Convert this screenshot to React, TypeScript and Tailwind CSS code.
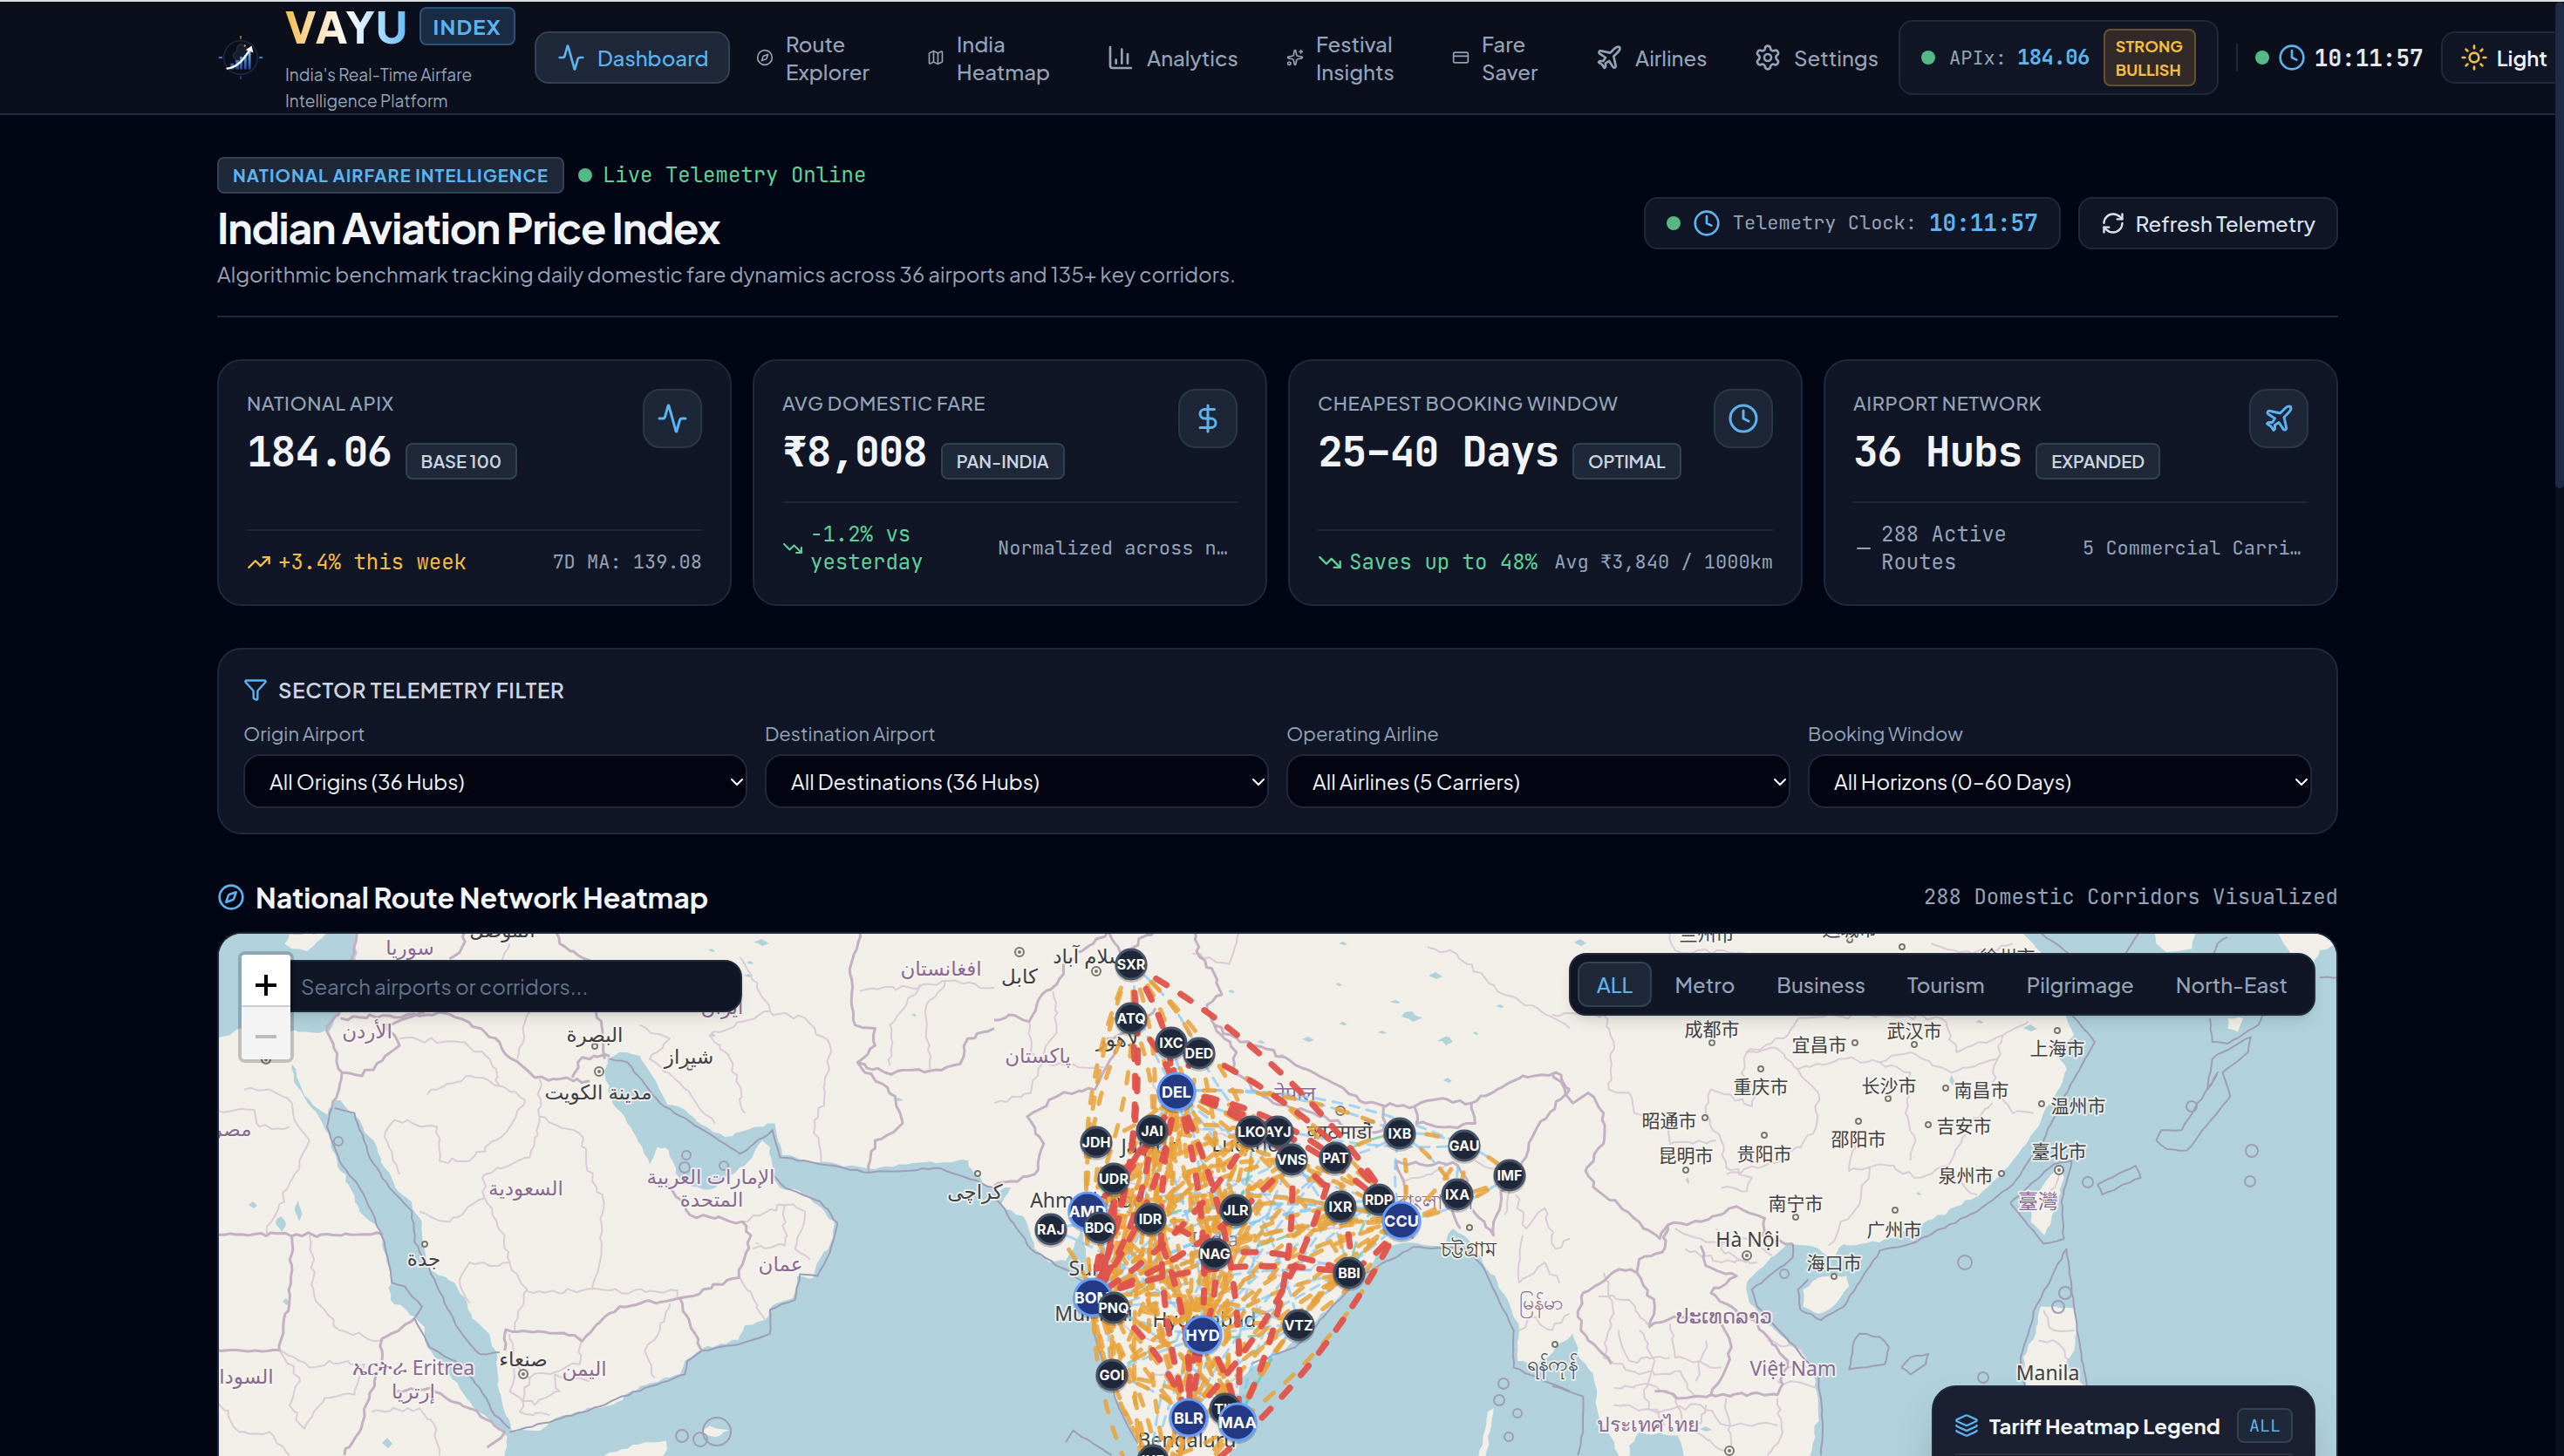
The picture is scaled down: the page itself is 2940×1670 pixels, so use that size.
import React, { useState } from "react";
import {
  Activity, Compass, Map as MapIcon, BarChart3, Sparkles, CreditCard, Plane, Settings, Clock, Sun,
  RefreshCw, DollarSign, TrendingUp, TrendingDown, Minus, Filter, Layers, ChevronDown, type LucideIcon,
} from "lucide-react";

const MONO = "font-['JetBrains_Mono','DejaVu_Sans_Mono',monospace]";

/* ---------- Map geometry ---------- */

type Pt = [number, number];
type Sheet = { ox: number; oy: number; sx: number; sy: number };

const WEST: Sheet = { ox: 240, oy: 1060, sx: 0.574, sy: 0.389 };
const CENTRAL: Sheet = { ox: 1140, oy: 1060, sx: 0.4209, sy: 0.389 };
const EAST: Sheet = { ox: 1780, oy: 1060, sx: 0.5867, sy: 0.389 };
const PLAIN: Sheet = { ox: 0, oy: 0, sx: 1, sy: 1 };

function parse(sheet: Sheet, text: string): Pt[] {
  return text.trim().split(/\s+/).map((p) => {
    const [x, y] = p.split(",").map(Number);
    return [sheet.ox + x * sheet.sx, sheet.oy + y * sheet.sy] as Pt;
  });
}

/* Subdivides a line with small offsets so that borders look surveyed, not ruled. */
function rough(pts: Pt[], amp: number, closed: boolean): string {
  let seed = Math.round(pts[0][0] * 7 + pts[0][1] * 13 + pts.length * 31);
  const rnd = () => {
    seed = (seed * 1103515245 + 12345) % 2147483648;
    return seed / 2147483648 - 0.5;
  };
  const src = closed ? [...pts, pts[0]] : pts;
  const out: Pt[] = [src[0]];
  for (let i = 1; i < src.length; i++) {
    const [ax, ay] = src[i - 1];
    const [bx, by] = src[i];
    const len = Math.hypot(bx - ax, by - ay);
    const n = Math.max(1, Math.min(60, Math.round(len / 7)));
    for (let k = 1; k < n; k++) {
      const t = k / n;
      out.push([ax + (bx - ax) * t + rnd() * amp, ay + (by - ay) * t + rnd() * amp]);
    }
    out.push([bx, by]);
  }
  return "M" + out.map(([x, y]) => `${x.toFixed(1)} ${y.toFixed(1)}`).join("L") + (closed ? "Z" : "");
}

const WATER: [Sheet, string][] = [
  [WEST, "0,0 298,0 292,100 275,180 262,250 240,318 205,322 170,315 150,330 60,310 40,330 0,340"],
  [WEST, "165,415 180,470 200,520 236,565 248,522 262,522 300,580 335,660 350,720 372,780 395,810 425,880 430,960 440,1020 490,1060 515,1120 525,1165 552,1200 572,1260 576,1360 590,1440 605,1500 600,1520 585,1500 520,1410 480,1330 435,1250 430,1190 410,1160 362,1110 358,1010 345,950 340,900 300,850 285,790 255,700 238,620 205,545 175,480"],
  [WEST, "820,380 860,390 885,450 915,535 950,550 985,595 1030,630 1090,600 1130,590 1140,700 1180,790 1140,780 1125,740 1120,660 1105,640 1085,690 1060,720 1000,785 940,770 925,700 910,660 890,680 880,710 865,660 835,590 805,530 790,450 795,400"],
  [PLAIN, "891,1309 897,1326 937,1334 1003,1342 1060,1334 1110,1332 1118,1348 1140,1366 1159,1363 1148,1383 1176,1400 1186,1433 1203,1449 1222,1447 1231,1433 1239,1410 1245,1433 1249,1468 1245,1496 1258,1535 1270,1574 1285,1612 1304,1655 1312,1700 579,1700 579,1667 584,1643 619,1642 636,1628 682,1616 708,1609 734,1591 780,1577 785,1562 805,1548 846,1538 854,1521 877,1515 886,1498 909,1490 914,1465 932,1467 940,1445 955,1420 957,1402 937,1383 917,1367 894,1360 886,1328"],
  [PLAIN, "1409,1700 1409,1670 1422,1620 1420,1585 1435,1570 1460,1558 1489,1535 1510,1515 1536,1488 1565,1461 1578,1441 1595,1430 1616,1426 1654,1430 1666,1410 1683,1422 1700,1449 1717,1472 1733,1503 1742,1527 1740,1562 1763,1566 1784,1546 1803,1531 1812,1560 1827,1577 1833,1624 1856,1670 1860,1700"],
  [EAST, "150,1540 170,1500 245,1510 265,1600 150,1600"],
  [PLAIN, "2311,1060 2331,1083 2343,1099 2337,1138 2367,1161 2378,1188 2358,1212 2370,1227 2358,1254 2343,1278 2326,1309 2302,1340 2279,1363 2249,1383 2202,1406 2155,1426 2114,1428 2103,1445 2085,1433 2050,1428 2026,1449 2003,1472 2006,1496 2032,1523 2067,1554 2082,1585 2085,1624 2076,1670 2076,1700 2700,1700 2700,1060"],
];

const ISLANDS: [Sheet, string][] = [
  [WEST, "160,32 235,28 215,55 195,82 165,75 150,60"],
  [WEST, "760,1600 800,1560 870,1530 912,1525 915,1550 890,1600"],
  [WEST, "980,1502 1000,1482 1040,1495 1010,1515"],
  [WEST, "895,660 915,670 918,700 905,730 890,690"],
  [EAST, "490,1080 520,1045 575,1040 580,1070 555,1120 520,1152 490,1130"],
  [EAST, "995,725 1000,750 985,830 962,920 935,880 945,800 975,740"],
  [EAST, "1175,20 1260,20 1250,75 1200,85 1180,60"],
  [EAST, "1410,20 1560,20 1560,50 1500,80 1480,140 1450,120 1440,80"],
  [EAST, "955,1130 1020,1135 1025,1200 1020,1260 1000,1310 1045,1370 925,1370 920,1280 945,1210"],
  [EAST, "1320,280 1350,280 1340,320 1320,310"],
  [CENTRAL, "1345,1440 1360,1430 1350,1500 1335,1600 1320,1590"],
];

const COUNTRY: [Sheet, string][] = [
  [WEST, "298,20 285,100 262,250 235,305 265,440 245,545"],
  [WEST, "262,280 470,265 550,320 650,455 760,465"],
  [WEST, "265,440 305,450 380,360 350,300 430,262"],
  [WEST, "512,20 505,70 480,105"],
  [WEST, "690,20 700,60 760,110 790,400"],
  [WEST, "725,455 745,395 800,392"],
  [WEST, "15,918 348,918"],
  [WEST, "590,1260 592,1198 730,1215 745,1232 790,1160 820,1130 940,1105 1058,1045 1082,920 1065,880 960,860 915,770"],
  [WEST, "940,1105 983,1258"],
  [WEST, "1300,20 1280,150 1290,300 1330,310 1330,360 1295,410 1350,440 1440,435 1500,415 1515,340 1568,310"],
  [WEST, "1295,410 1370,510 1385,590 1330,640 1318,735"],
  [WEST, "410,1165 345,1225 345,1290 320,1400 300,1500 270,1568"],
  [WEST, "375,1380 440,1370 520,1430 590,1500 555,1545"],
  [WEST, "15,1258 140,1258 160,1120 165,920"],
  [CENTRAL, "0,285 40,270 95,290 130,210 170,180 200,110 270,60 310,20"],
  [CENTRAL, "310,20 345,90 440,20"],
  [CENTRAL, "545,20 560,100 600,150 620,210 580,240 600,300 670,350 740,370 850,430 940,480 1010,530 1145,540 1200,520 1300,530 1440,450 1530,440 1568,490"],
  [CENTRAL, "600,300 660,380 650,440 760,530 870,560 1010,620 1060,610 1060,535"],
  [CENTRAL, "1145,540 1150,590 1240,600 1310,590 1300,530"],
  [CENTRAL, "305,425 275,490 180,505 90,570 135,650 110,740 0,775"],
  [CENTRAL, "305,425 330,380 310,340 400,310 440,250"],
  [CENTRAL, "1095,700 1160,710 1250,705 1290,760 1240,830 1270,900"],
  [CENTRAL, "1095,700 1120,790 1150,830 1140,930"],
  [CENTRAL, "1430,740 1380,790 1360,920 1335,880 1300,840"],
  [CENTRAL, "1568,490 1480,600 1430,740"],
  [EAST, "0,440 40,530 70,500 100,560 100,650 65,730 90,790 130,830 160,870 210,930 225,890 290,880 360,835 415,870 410,920 470,945"],
  [EAST, "225,890 215,970 170,990 165,1030 130,1020 60,1090 50,1160 70,1230 115,1300"],
  [EAST, "165,1030 200,1130 190,1190 250,1160 330,1180 350,1250 340,1310 310,1390 260,1400 200,1380"],
  [EAST, "290,950 300,1010 360,1040 310,1090 400,1180 460,1290 440,1390 310,1390"],
];

const PROVINCE: [Sheet, string][] = [
  [WEST, "70,490 120,490 165,530 170,580 200,640 180,700 115,915"],
  [WEST, "15,550 90,550 100,600 160,600"],
  [WEST, "200,920 210,1100 260,1200 345,1230"],
  [WEST, "435,505 520,450 580,480 630,520 600,600 520,700 460,700 455,600 370,580 350,630 380,740"],
  [WEST, "380,340 500,350 560,400 580,480"],
  [WEST, "660,460 660,570 740,620 765,760 785,800 780,1000 765,1080"],
  [WEST, "660,570 640,690 550,740 550,810 480,880 420,850"],
  [WEST, "550,810 590,920 600,1000 635,1080 610,1200"],
  [WEST, "635,1085 935,1083 935,1105"],
  [WEST, "600,1000 560,1010 520,1000 500,1050 520,1120"],
  [WEST, "920,1120 900,1200 870,1260 890,1340"],
  [WEST, "600,1210 610,1300 640,1340 740,1300 740,1220"],
  [WEST, "610,1300 600,1380 650,1420 700,1380 690,1330 760,1350"],
  [WEST, "640,1340 620,1440 680,1450"],
  [WEST, "15,1400 60,1500 120,1500 160,1568"],
  [WEST, "140,1258 180,1340 160,1420 190,1490 230,1400 290,1390 310,1300 240,1290 200,1310 140,1258"],
  [WEST, "325,1440 420,1430 450,1480 460,1568"],
  [WEST, "860,300 920,340 880,400 940,470 1010,590"],
  [WEST, "1060,100 1120,260 1000,330 1040,400 1070,560"],
  [WEST, "1120,260 1190,280 1240,360 1230,500 1210,600 1222,710"],
  [WEST, "1420,180 1360,300 1360,420"],
  [WEST, "1470,170 1430,260 1440,430"],
  [WEST, "1300,200 1400,190 1480,170 1568,190"],
  [WEST, "1065,880 1150,830 1190,850 1170,960 1200,990"],
  [WEST, "1060,1045 1110,1170"],
  [WEST, "1085,960 1150,950 1150,830"],
  [WEST, "600,60 560,180 640,260 615,400"],
  [CENTRAL, "0,530 100,500 170,300 160,200"],
  [CENTRAL, "95,290 100,380 160,420 300,425"],
  [CENTRAL, "1180,70 1260,90 1370,200 1480,250 1568,310"],
  [CENTRAL, "540,90 640,120 670,20"],
  [CENTRAL, "1090,720 1120,760 1180,740 1250,705"],
  [CENTRAL, "1310,700 1400,740 1390,860"],
  [CENTRAL, "1420,800 1450,900 1500,840 1530,960 1568,930"],
  [CENTRAL, "1440,920 1430,1060 1500,1000 1540,1060"],
  [CENTRAL, "1430,1200 1460,1160 1520,1200 1568,1150"],
  [CENTRAL, "420,440 470,560 600,620 740,640 860,760 1000,770 1040,800"],
  [CENTRAL, "300,720 400,780 560,740 700,760 840,900 940,900"],
  [CENTRAL, "290,1000 400,960 540,1000 640,950 780,1040 920,1000"],
  [CENTRAL, "340,1180 460,1240 540,1100 700,1080 740,1200"],
  [CENTRAL, "350,1350 480,1330 600,1400 660,1340"],
  [EAST, "0,270 100,270 120,350 110,490 150,500 160,560 220,580 230,650 320,640"],
  [EAST, "230,20 240,80 380,90"],
  [EAST, "740,60 820,90 900,60"],
  [EAST, "480,280 460,330 380,380 370,440 400,500 390,540 310,490 300,560 330,640 340,720 390,750 380,790 330,780"],
  [EAST, "380,380 440,370 480,430 520,500 510,620 450,700 340,740"],
  [EAST, "480,430 560,400 640,410 700,440 690,560 710,640 700,700"],
  [EAST, "640,410 700,380 780,440 870,400 880,330 930,290"],
  [EAST, "870,400 860,470 900,560 940,560"],
  [EAST, "860,530 810,600 780,700 720,750 640,710 580,730 590,650"],
  [EAST, "620,720 600,830 560,900 540,950"],
  [EAST, "770,740 830,800"],
  [EAST, "760,280 790,380 880,330"],
  [EAST, "480,280 620,270 760,280"],
  [EAST, "100,1030 120,1150 100,1280 170,1330 250,1320 280,1400"],
  [EAST, "170,1200 200,1290 180,1400 220,1480"],
  [EAST, "230,1180 240,1280 330,1310"],
  [EAST, "120,1420 200,1440 290,1420 340,1480 440,1480"],
  [EAST, "300,1230 280,1350"],
  [EAST, "130,1200 150,1290 230,1280"],
  [EAST, "90,1100 150,1110 190,1190"],
  [EAST, "120,1370 190,1360 240,1400 260,1500"],
  [EAST, "300,1420 280,1500 350,1568"],
  [EAST, "240,900 300,940 380,930 430,980"],
  [EAST, "260,960 330,1000 400,1000"],
  [EAST, "320,900 330,960 380,1000"],
  [EAST, "400,1180 440,1150"],
  [EAST, "420,1230 490,1260"],
  [EAST, "430,1300 500,1310"],
  [EAST, "440,1350 515,1370"],
  [EAST, "340,1400 350,1568"],
  [EAST, "440,1400 450,1500 420,1568"],
  [EAST, "960,1140 980,1200 1020,1200"],
  [EAST, "950,1230 990,1240 1010,1290"],
  [EAST, "990,740 975,800 990,830"],
];

const MARITIME: [Sheet, string][] = [
  [WEST, "245,545 235,600 260,700 300,780 325,850 350,940 365,1060 390,1070 425,1130 410,1165 440,1250 500,1300 540,1370 570,1450 600,1490"],
  [WEST, "250,545 290,560 320,690 360,780 405,850 410,940 450,1050 470,1120 500,1200 540,1270 580,1265"],
  [WEST, "800,400 835,410 900,530 1030,650 1060,680 1125,610 1140,690 1220,710 1318,735 1460,722 1568,780"],
  [WEST, "1125,740 1150,780 1220,820 1255,885 1240,970 1215,1040 1180,1035 1170,1110 1120,1140 1120,1210 1060,1240 985,1260 955,1290 950,1330 870,1370 780,1425 690,1465 600,1500"],
  [CENTRAL, "0,800 100,960 250,1060 280,1240 340,1430 390,1530 430,1600"],
  [CENTRAL, "195,1530 215,1495 320,1568"],
  [CENTRAL, "700,1300 820,1250 1000,1040 1140,955 1290,960 1330,1010 1415,1200 1415,1310 1568,1380"],
  [EAST, "0,1365 60,1395 60,1500 50,1568"],
  [EAST, "470,945 470,985 390,1080 400,1130 480,1260 520,1330 528,1470 525,1568"],
  [EAST, "500,1050 480,1080 485,1140 525,1170 570,1130 640,965 700,945 830,850 900,770 960,640 1000,510 1060,350 1010,260"],
  [EAST, "895,825 980,710 1015,700 995,820 1000,930 960,945 895,825"],
  [EAST, "1005,960 1025,1200 1045,1370"],
  [EAST, "1005,960 945,1130 915,1280 925,1370"],
  [EAST, "600,1210 640,1220 658,1250 650,1300 580,1315 590,1230 600,1210"],
  [EAST, "682,1310 700,1280 735,1270 730,1300 700,1330 682,1310"],
  [EAST, "1180,640 1190,610 1230,610 1300,440 1280,490 1290,400 1310,380 1365,335 1360,380 1310,440 1325,510 1240,670 1200,665 1180,640"],
  [EAST, "1065,770 1140,715 1150,750 1075,800 1065,770"],
  [EAST, "1285,280 1290,350 1320,355 1380,300 1390,260"],
  [EAST, "945,20 1010,90 940,160"],
  [EAST, "1120,90 1150,20"],
  [EAST, "1240,270 1300,60 1320,40"],
  [EAST, "1500,160 1540,160"],
];

const RINGS: [number, number, number][] = [
  [2253, 1449, 8], [2582, 1321, 7], [2580, 1356, 6], [2394, 1357, 6], [2046, 1462, 5], [2274, 1581, 6], [2513, 1270, 6],
  [1724, 1588, 6], [1719, 1607, 6], [1740, 1622, 5], [1730, 1649, 5], [388, 1310, 5], [787, 1326, 5], [785, 1340, 6],
  [830, 1338, 5], [782, 1648, 7], [822, 1643, 16], [803, 1652, 8], [2368, 1484, 7], [2360, 1500, 7],
];

const LAKES: [number, number, number, number][] = [
  [1619, 1167, 12, 6], [1657, 1195, 9, 5], [1646, 1120, 8, 4], [1500, 1193, 7, 3], [1540, 1175, 5, 2], [1585, 1185, 5, 2],
  [1446, 1196, 5, 2], [1412, 1138, 4, 2], [1600, 1150, 6, 2], [1535, 1130, 4, 2], [1660, 1240, 5, 3], [1720, 1155, 5, 2],
  [1812, 1082, 7, 4], [873, 1082, 9, 4], [816, 1091, 4, 2], [860, 1105, 4, 2], [858, 1120, 5, 2], [1030, 1262, 6, 2],
  [290, 1383, 5, 4], [342, 1390, 4, 12], [322, 1405, 6, 9], [444, 1656, 6, 6], [328, 1494, 4, 4], [1048, 1165, 3, 2],
  [2328, 1180, 8, 4], [2238, 1240, 3, 6], [2200, 1370, 3, 2], [1935, 1355, 2, 4], [2270, 1173, 5, 2], [817, 1188, 4, 2],
  [868, 1427, 3, 1], [1956, 1640, 7, 3], [1540, 1083, 5, 2], [1470, 1212, 4, 2], [1692, 1186, 3, 2],
];

/* Kinds: c = city, p = country or region, h = city in Han script. */
type Label = [number, number, string, "c" | "p" | "h"];
const LABELS: Label[] = [
  [470, 1087, "سوريا", "p"], [1079, 1111, "افغانستان", "p"], [682, 1187, "البصرة", "c"], [421, 1183, "الأردن", "p"],
  [790, 1212, "شیراز", "c"], [686, 1253, "مدينة الكويت", "c"], [266, 1295, "مصر", "p"], [603, 1363, "السعودية", "p"],
  [815, 1350, "الإمارات العربية", "p"], [816, 1376, "المتحدة", "p"], [895, 1450, "عمان", "p"], [486, 1444, "جدة", "c"],
  [600, 1559, "صنعاء", "c"], [670, 1570, "اليمن", "p"], [474, 1569, "ኤርትራ Eritrea", "p"], [474, 1596, "إرتريا", "p"],
  [274, 1579, "السودان", "p"], [828, 1155, "ایران", "p"], [1118, 1367, "کراچی", "c"], [576, 1067, "الموصل", "c"],
  [1169, 1120, "کابل", "c"], [1252, 1097, "اسلام آباد", "c"], [1281, 1192, "لاهور", "c"], [1190, 1211, "پاکستان", "p"],
  [1485, 1254, "नेपाल", "p"], [1536, 1298, "काठमाडौँ", "c"], [1317, 1315, "Jaipur", "c"], [1437, 1313, "Lucknow", "c"],
  [1247, 1377, "Ahmedabad", "c"], [1254, 1455, "Surat", "c"], [1254, 1507, "Mumbai", "c"], [1381, 1514, "Hyderabad", "c"],
  [1361, 1652, "Bengaluru", "c"], [1393, 1422, "India", "p"], [1684, 1433, "চট্টগ্রাম", "c"], [1645, 1379, "বাংলাদেশ", "p"],
  [1767, 1494, "မြန်မာ", "p"], [1780, 1564, "ရန်ကုန်", "c"],
  [1963, 1181, "成都市", "h"], [2086, 1199, "宜昌市", "h"], [2195, 1183, "武汉市", "h"], [2359, 1203, "上海市", "h"],
  [2019, 1247, "重庆市", "h"], [2166, 1246, "长沙市", "h"], [2272, 1251, "南昌市", "h"], [2383, 1269, "温州市", "h"],
  [1914, 1286, "昭通市", "h"], [2252, 1292, "吉安市", "h"], [1933, 1326, "昆明市", "h"], [2023, 1324, "贵阳市", "h"],
  [2131, 1307, "邵阳市", "h"], [2361, 1321, "臺北市", "h"], [2254, 1349, "泉州市", "h"], [2337, 1378, "臺灣", "p"],
  [2059, 1381, "南宁市", "h"], [2172, 1411, "广州市", "h"], [2103, 1449, "海口市", "h"], [2004, 1422, "Hà Nội", "c"],
  [1977, 1510, "ປະເທດລາວ", "p"], [2056, 1570, "Việt Nam", "p"], [1889, 1634, "ประเทศไทย", "p"], [2348, 1575, "Manila", "c"],
  [1957, 1072, "兰州市", "h"], [2121, 1066, "运城市", "h"], [2302, 1098, "徐州市", "h"],
];

const TOWNS: Pt[] = [
  [1963, 1197], [2127, 1197], [2195, 1199], [2359, 1183], [2019, 1227], [2165, 1261], [2231, 1249], [2341, 1267],
  [1955, 1283], [2211, 1291], [1933, 1343], [2023, 1303], [2131, 1287], [2295, 1347], [2059, 1397], [2173, 1389],
  [2103, 1465], [2121, 1079], [2181, 1087], [682, 1201], [791, 1225], [487, 1428], [1121, 1347], [1685, 1409], [1783, 1543],
];
const CAPITALS: Pt[] = [
  [2361, 1343], [2003, 1441], [1983, 1665], [687, 1230], [600, 1577], [1169, 1093], [1257, 1115], [1537, 1275], [305, 1216],
];

/* ---------- Airports and corridors ---------- */

const AIRPORTS: Record<string, { x: number; y: number; hub?: boolean }> = {
  SXR: { x: 1297, y: 1107 }, ATQ: { x: 1297, y: 1169 }, IXC: { x: 1343, y: 1197 }, DED: { x: 1375, y: 1209 },
  JAI: { x: 1321, y: 1298 }, JDH: { x: 1257, y: 1311 }, AYJ: { x: 1465, y: 1299 }, LKO: { x: 1435, y: 1299 },
  VNS: { x: 1481, y: 1331 }, PAT: { x: 1531, y: 1329 }, IXB: { x: 1605, y: 1301 }, GAU: { x: 1679, y: 1315 },
  IMF: { x: 1731, y: 1349 }, IXA: { x: 1671, y: 1371 }, UDR: { x: 1277, y: 1353 }, AMD: { x: 1247, y: 1390, hub: true },
  RAJ: { x: 1205, y: 1411 }, BDQ: { x: 1261, y: 1409 }, IDR: { x: 1319, y: 1399 }, JLR: { x: 1417, y: 1389 },
  NAG: { x: 1393, y: 1439 }, IXR: { x: 1537, y: 1385 }, RDP: { x: 1581, y: 1377 }, CCU: { x: 1607, y: 1401, hub: true },
  BBI: { x: 1547, y: 1461 }, DEL: { x: 1349, y: 1253, hub: true }, BOM: { x: 1253, y: 1489, hub: true },
  PNQ: { x: 1277, y: 1501 }, HYD: { x: 1379, y: 1532, hub: true }, VTZ: { x: 1489, y: 1521 }, GOI: { x: 1275, y: 1578 },
  BLR: { x: 1363, y: 1627, hub: true }, TIR: { x: 1405, y: 1617 }, MAA: { x: 1419, y: 1632, hub: true },
  IXE: { x: 1322, y: 1676 }, CJB: { x: 1345, y: 1712 }, COK: { x: 1318, y: 1735 }, TRV: { x: 1340, y: 1775 },
};

const RED = "SXR-CCU SXR-BOM ATQ-BOM SXR-DEL DEL-IXC DEL-DED DEL-BOM JAI-BOM BOM-JAI DEL-UDR DEL-CCU DEL-PAT DEL-VNS DED-CCU DEL-BLR BLR-DEL DEL-MAA CCU-COK BOM-BBI NAG-BBI IDR-NAG PAT-BLR VNS-MAA LKO-BOM VNS-BOM PNQ-BLR BLR-HYD HYD-MAA NAG-HYD CCU-BBI IXR-BBI BDQ-BOM IDR-BLR UDR-BOM VNS-IXR DEL-AMD ATQ-DEL".split(" ");

const AMBER = "SXR-AMD AMD-SXR BOM-SXR SXR-JAI SXR-IXC SXR-DED ATQ-DEL ATQ-JAI AMD-ATQ IXC-BOM IXC-HYD DED-BOM DED-HYD DED-PAT DED-CCU SXR-LKO DEL-IXB IXB-GAU GAU-IMF IMF-IXA GAU-IXA IXA-CCU IMF-CCU GAU-CCU IXB-CCU IXB-IXA PAT-IXB PAT-CCU PAT-IXR IXR-CCU RDP-IXR RDP-PAT DEL-HYD HYD-DEL DEL-GOI DEL-NAG NAG-DEL DEL-IDR DEL-JLR DEL-PNQ PNQ-DEL DEL-COK COK-DEL DEL-TIR DEL-BBI DEL-IXR DEL-LKO DEL-AYJ DEL-JDH JDH-BOM JDH-AMD RAJ-BOM UDR-IDR UDR-HYD AMD-GOI AMD-BLR AMD-MAA AMD-HYD AMD-NAG AMD-VNS AMD-LKO AMD-CCU BOM-GOI GOI-BOM BOM-COK BOM-TRV BOM-HYD BOM-NAG BOM-JLR BOM-LKO BOM-AYJ BOM-PAT BOM-CCU BOM-VTZ BOM-BLR BOM-MAA PNQ-HYD PNQ-NAG PNQ-CCU PNQ-MAA PNQ-JAI PNQ-LKO GOI-HYD GOI-BLR GOI-MAA GOI-CCU HYD-CCU HYD-BBI HYD-VTZ HYD-VNS HYD-LKO HYD-PAT HYD-IXR HYD-JAI HYD-IDR HYD-COK HYD-TIR BLR-CCU BLR-BBI BLR-VTZ BLR-LKO BLR-VNS BLR-JAI BLR-IDR BLR-NAG BLR-JLR BLR-IXE BLR-COK BLR-PNQ MAA-CCU MAA-BBI MAA-VTZ MAA-JAI MAA-LKO MAA-NAG MAA-COK MAA-IXE VTZ-CCU CCU-VTZ VTZ-BBI BBI-CCU BBI-IXR NAG-CCU NAG-VNS NAG-IXR JLR-IXR JLR-VNS JLR-IDR IDR-LKO IDR-VNS IDR-BDQ BDQ-DEL BDQ-HYD JAI-LKO JAI-NAG JAI-CCU LKO-VNS LKO-HYD AYJ-VNS VNS-CCU CCU-MAA COK-BBI COK-BOM GOI-DEL IXE-BOM TRV-BLR TRV-MAA BLR-IXR CJB-HYD CJB-DEL CJB-BOM".split(" ");

const SKY = "SXR-DED DEL-SXR DEL-GAU DEL-IXB GAU-DEL IXB-GAU GAU-IMF IMF-CCU IXA-GAU IXB-IXA CCU-IXB IXB-PAT IXR-CCU RDP-DEL BOM-DEL BOM-VNS BOM-JLR BOM-IXR BOM-RDP BOM-CCU BOM-MAA RAJ-HYD RAJ-BDQ AMD-PNQ AMD-JLR AMD-IXR GOI-PNQ GOI-BLR GOI-VTZ HYD-BOM HYD-NAG HYD-RDP HYD-AYJ HYD-BBI BLR-HYD BLR-MAA BLR-VTZ BLR-PAT BLR-RDP MAA-HYD MAA-VTZ MAA-BBI MAA-IXR MAA-VNS PNQ-IDR PNQ-BBI PNQ-VTZ NAG-BOM NAG-BBI NAG-LKO JLR-DEL JLR-CCU IDR-JAI IDR-CCU JAI-HYD JAI-PAT VNS-BBI VNS-DED PAT-BOM LKO-IXR COK-HYD COK-NAG CCU-HYD DEL-VTZ IXC-BLR".split(" ");

const GREEN = "JAI-UDR DEL-JAI AMD-IDR IDR-JLR NAG-JLR BOM-PNQ PNQ-NAG BLR-TIR HYD-IDR MAA-CCU BBI-RDP VTZ-HYD BOM-IDR PAT-IXB JAI-IDR GOI-HYD LKO-JLR IXR-NAG".split(" ");

function routePath(pair: string): string {
  const [a, b] = pair.split("-").map((k) => AIRPORTS[k]);
  const dx = b.x - a.x;
  const dy = b.y - a.y;
  const cx = (a.x + b.x) / 2 + dy * 0.13;
  const cy = (a.y + b.y) / 2 - dx * 0.13;
  return `M${a.x} ${a.y}Q${cx.toFixed(1)} ${cy.toFixed(1)} ${b.x} ${b.y}`;
}

function Routes({ pairs, color, width, dash, opacity }: { pairs: string[]; color: string; width: number; dash: string; opacity: number }) {
  return (
    <g fill="none" stroke={color} strokeWidth={width} strokeDasharray={dash} strokeOpacity={opacity} strokeLinecap="round">
      {pairs.map((p, i) => <path key={p + i} d={routePath(p)} />)}
    </g>
  );
}

function GeoMap() {
  const line = (list: [Sheet, string][], amp: number) =>
    list.map(([s, t], i) => <path key={i} d={rough(parse(s, t), amp, false)} />);
  return (
    <svg viewBox="251 1072 2428 1100" preserveAspectRatio="xMidYMin slice" className="block h-full w-full bg-[#f2efe9]" aria-label="Route network map">
      <g fill="#b1d2dd">
        {WATER.map(([s, t], i) => <path key={i} d={rough(parse(s, t), 4, true)} />)}
        {LAKES.map(([x, y, w, h], i) => <path key={i} d={rough([[x - w, y], [x, y - h], [x + w, y + 1], [x + 1, y + h]], 5, true)} />)}
      </g>
      <g fill="#f2efe9">
        {ISLANDS.map(([s, t], i) => <path key={i} d={rough(parse(s, t), 3, true)} />)}
      </g>
      <g fill="none" strokeLinejoin="round">
        <g stroke="#dacbd6" strokeWidth="2">{line(PROVINCE, 6)}</g>
        <g stroke="#c3b0c2" strokeWidth="3">{line(COUNTRY, 5)}</g>
        <g stroke="#9f9cb8" strokeWidth="2">
          {line(MARITIME, 2)}
          {RINGS.map(([x, y, r], i) => <circle key={i} cx={x} cy={y} r={r} />)}
        </g>
      </g>
      <g fill="#f5f3ee" stroke="#77776f" strokeWidth="2">
        {TOWNS.map(([x, y], i) => <circle key={i} cx={x} cy={y} r="3" />)}
        {CAPITALS.map(([x, y], i) => (
          <g key={i}><circle cx={x} cy={y} r="5" /><circle cx={x} cy={y} r="1" /></g>
        ))}
      </g>
      <g className="font-['Noto_Sans','Noto_Sans_CJK_SC','DejaVu_Sans',sans-serif]" textAnchor="middle" dominantBaseline="central" stroke="#f7f5f1" strokeWidth="4" strokeOpacity="0.8" strokeLinejoin="round" style={{ paintOrder: "stroke" }}>
        {LABELS.map(([x, y, t, kind], i) => (
          <text key={i} x={x} y={y} fontSize={kind === "h" ? 21 : 23} fill={kind === "p" ? "#8a6a90" : "#404040"}>{t}</text>
        ))}
      </g>
      <Routes pairs={SKY} color="#7cc4f5" width={3} dash="11 9" opacity={0.65} />
      <Routes pairs={GREEN} color="#6cc49a" width={3} dash="13 10" opacity={0.7} />
      <Routes pairs={AMBER} color="#e9a23b" width={5} dash="13 18" opacity={0.85} />
      <Routes pairs={RED} color="#df524c" width={7} dash="14 19" opacity={0.95} />
      <g className="font-['Inter',sans-serif]" fontWeight="700" textAnchor="middle" dominantBaseline="central" fill="#fff">
        {Object.entries(AIRPORTS).map(([code, a]) => (
          <g key={code}>
            <circle cx={a.x} cy={a.y + 2} r={a.hub ? 23 : 19} fill="#000" fillOpacity="0.2" />
            <circle cx={a.x} cy={a.y} r={a.hub ? 21 : 17} fill={a.hub ? "#243a85" : "#1e283a"} stroke={a.hub ? "#6a9df6" : "#475366"} strokeWidth="3" />
            <text x={a.x} y={a.y} fontSize={a.hub ? 18 : 16}>{code}</text>
          </g>
        ))}
      </g>
    </svg>
  );
}

/* ---------- Header ---------- */

function Dot() {
  return <span className="size-4 shrink-0 rounded-full bg-[#54b985]" />;
}

function Logo() {
  return (
    <svg viewBox="0 0 56 56" className="h-14 w-[54px] shrink-0" aria-label="Vayu logo">
      <defs>
        <linearGradient id="bars" x1="0" y1="0" x2="0" y2="1">
          <stop offset="0" stopColor="#6cc0f5" />
          <stop offset="1" stopColor="#24459c" />
        </linearGradient>
      </defs>
      <circle cx="28" cy="28" r="20" fill="none" stroke="#1b2a40" strokeWidth="1.5" />
      <path d="M2 28h4M50 28h4" stroke="#3b82b8" strokeWidth="2" />
      <path d="M28 2v4" stroke="#c98a2c" strokeWidth="1.5" />
      <path d="M28 50v4" stroke="#2f4fb0" strokeWidth="1.5" />
      <path d="M24 14l5-3 4 5 5 2-3 8-6 9-7-4-4-6 5-4z" fill="#16202f" stroke="#26364d" strokeWidth="1" />
      <path d="M16 42v-7h4v7zM22 42V31h4v11zM27 42V27h3v15zM32 42V25h3v17zM37 42V21h3v21z" fill="url(#bars)" />
      <path d="M12 41c11-1 18-9 26-21" fill="none" stroke="#fff" strokeWidth="2.4" strokeLinecap="round" />
      <path d="M34 19l7-5 2 8z" fill="#fff" />
      <circle cx="33" cy="14" r="1.2" fill="#e39a35" />
    </svg>
  );
}

const NAV: { label: string; icon: LucideIcon; width: string; small?: boolean; active?: boolean }[] = [
  { label: "Dashboard", icon: Activity, width: "w-56", active: true },
  { label: "Route Explorer", icon: Compass, width: "w-48", small: true },
  { label: "India Heatmap", icon: MapIcon, width: "w-[202px]", small: true },
  { label: "Analytics", icon: BarChart3, width: "w-[202px]" },
  { label: "Festival Insights", icon: Sparkles, width: "w-[186px]", small: true },
  { label: "Fare Saver", icon: CreditCard, width: "w-[160px]", small: true },
  { label: "Airlines", icon: Plane, width: "w-[178px]" },
  { label: "Settings", icon: Settings, width: "w-48" },
];

function Header() {
  return (
    <header className="h-[130px] shrink-0 border-b-2 border-[#1e293b] bg-[#0b0f1c]">
      <div className="mx-auto flex h-full max-w-[2560px] items-center px-16">
        <Logo />
        <div className="ml-6 w-[268px] shrink-0">
          <div className="flex items-center gap-3">
            <span className="bg-linear-to-r from-[#f3bd48] via-white to-[#5db8f5] bg-clip-text text-[50px] leading-[56px] font-extrabold tracking-wide text-transparent">VAYU</span>
            <span className="rounded-lg border-2 border-[#28527a] bg-[#1a2c44] px-3.5 py-1 text-2xl leading-8 font-bold tracking-wider text-[#5cb3f0]">INDEX</span>
          </div>
          <p className="mt-3 text-[19px] leading-[30px] whitespace-nowrap text-[#94a3b8]">India's Real-Time Airfare<br />Intelligence Platform</p>
        </div>
        <nav className="ml-[18px] flex shrink-0 items-center gap-1">
          {NAV.map(({ label, icon: Icon, width, small, active }) => (
            <a key={label} href="#" className={`flex shrink-0 items-center gap-3.5 rounded-2xl border-2 px-6 py-3 text-2xl leading-8 font-medium ${width} ${active ? "border-[#334155] bg-[#1f2838] text-[#5cb3f0]" : "border-transparent text-[#94a3b8]"}`}>
              <Icon className={small ? "size-5 shrink-0" : "size-8 shrink-0"} />
              <span>{label}</span>
            </a>
          ))}
        </nav>
        <div className="flex shrink-0 items-center">
          <div className="flex items-center gap-4 rounded-2xl border-2 border-[#1e293b] bg-[#111627] px-6 py-2">
            <Dot />
            <span className={`flex items-center gap-3 ${MONO}`}>
              <span className="text-[22px] text-[#94a3b8]">APIx:</span>
              <span className="text-2xl font-bold tracking-tight text-[#5cb3f0]">184.06</span>
            </span>
            <span className="w-[106px] rounded-lg border-2 border-[#6b502a] bg-[#322a29] px-3 py-1 text-lg leading-[27px] font-bold text-[#f5bc42]">STRONG BULLISH</span>
          </div>
          <span className="mx-5 h-8 w-0.5 bg-[#1e293b]" />
          <div className="flex items-center gap-2.5">
            <Dot />
            <Clock className="size-8 text-[#5cb3f0]" />
            <time className={`text-[26px] font-bold text-[#e2e8f0] ${MONO}`}>10:11:57</time>
          </div>
          <button className="ml-5 flex items-center gap-2.5 rounded-2xl border-2 border-[#1e293b] bg-[#111627] px-5 py-3 text-2xl leading-8 font-semibold text-[#f1f5f9]">
            <Sun className="size-8 text-[#f5bc42]" />
            Light
          </button>
        </div>
      </div>
    </header>
  );
}

/* ---------- Page sections ---------- */

function PageTitle() {
  return (
    <div className="flex items-center justify-between border-b-2 border-[#1e293b] pb-[30px]">
      <div>
        <div className="flex items-center">
          <span className="rounded-lg border-2 border-[#334155] bg-[#1f2838] px-4 py-1 text-xl leading-[30px] font-bold tracking-wider text-[#5cb3f0]">NATIONAL AIRFARE INTELLIGENCE</span>
          <span className={`ml-4 flex items-center gap-3 text-2xl leading-8 text-[#5fd196] ${MONO}`}><Dot />Live Telemetry Online</span>
        </div>
        <h1 className="mt-3 text-5xl leading-[54px] font-bold tracking-tight text-[#f1f5f9]">Indian Aviation Price Index</h1>
        <p className="mt-2 text-2xl leading-9 text-[#94a3b8]">Algorithmic benchmark tracking daily domestic fare dynamics across 36 airports and 135+ key corridors.</p>
      </div>
      <div className="flex items-center gap-5">
        <div className={`flex items-center gap-3.5 rounded-2xl border-2 border-[#1e293b] bg-[#111627] px-6 py-3 leading-8 ${MONO}`}>
          <Dot />
          <Clock className="size-8 text-[#5cb3f0]" />
          <span className="text-[22px] text-[#94a3b8]">Telemetry Clock:</span>
          <time className="text-[26px] font-bold text-[#5cb3f0]">10:11:57</time>
        </div>
        <button className="flex items-center gap-3 rounded-2xl border-2 border-[#1e293b] bg-[#111627] px-6 py-3 text-2xl leading-8 font-medium text-[#dbe2ec]">
          <RefreshCw className="size-7" />
          Refresh Telemetry
        </button>
      </div>
    </div>
  );
}

type Stat = { label: string; value: string; tag: string; icon: LucideIcon; trendIcon: LucideIcon; trend: React.ReactNode; color: string; note: string; noteWidth: string; small?: boolean };
const STATS: Stat[] = [
  { label: "NATIONAL APIX", value: "184.06", tag: "BASE 100", icon: Activity, trendIcon: TrendingUp, trend: "+3.4% this week", color: "text-[#f5bc42]", note: "7D MA: 139.08", noteWidth: "" },
  { label: "AVG DOMESTIC FARE", value: "₹8,008", tag: "PAN-INDIA", icon: DollarSign, trendIcon: TrendingDown, trend: "-1.2% vs yesterday", color: "text-[#5fd196]", note: "Normalized across network", noteWidth: "w-[275px]", small: true },
  { label: "CHEAPEST BOOKING WINDOW", value: "25–40 Days", tag: "OPTIMAL", icon: Clock, trendIcon: TrendingDown, trend: "Saves up to 48%", color: "text-[#5fd196]", note: "Avg ₹3,840 / 1000km", noteWidth: "" },
  { label: "AIRPORT NETWORK", value: "36 Hubs", tag: "EXPANDED", icon: Plane, trendIcon: Minus, trend: "288 Active Routes", color: "text-[#94a3b8]", note: "5 Commercial Carriers", noteWidth: "w-[259px]", small: true },
];

function StatCard({ s }: { s: Stat }) {
  const Icon = s.icon;
  const Trend = s.trendIcon;
  return (
    <article className="flex min-h-[283px] flex-col justify-between rounded-[28px] border-2 border-[#1e293b] bg-[#111627] p-8">
      <div className="flex items-start justify-between">
        <div>
          <h2 className="text-[22px] leading-8 font-medium tracking-wide text-[#94a3b8]">{s.label}</h2>
          <div className="mt-2 flex items-end gap-4">
            <span className={`text-5xl leading-[64px] font-bold tracking-tight whitespace-nowrap text-[#f1f5f9] ${MONO}`}>{s.value}</span>
            <span className="rounded-lg border-2 border-[#334155] bg-[#1f2838] px-4 py-1 text-xl leading-[30px] font-semibold whitespace-nowrap text-[#cbd5e1]">{s.tag}</span>
          </div>
        </div>
        <span className="flex size-[68px] shrink-0 items-center justify-center rounded-[20px] border-2 border-[#2a3749] bg-[#1c2636]">
          <Icon className="size-9 text-[#5cb3f0]" />
        </span>
      </div>
      <div className={`flex items-center justify-between gap-4 border-t-2 border-[#1c2638] pt-5 ${MONO}`}>
        <span className={`flex items-center gap-2 text-2xl leading-8 ${s.color}`}>
          <Trend className={s.small ? "size-6 shrink-0" : "size-7 shrink-0"} />
          <span className={s.small ? "w-[150px]" : "whitespace-nowrap"}>{s.trend}</span>
        </span>
        <span className={`shrink-0 truncate text-[22px] leading-8 text-[#94a3b8] ${s.noteWidth}`}>{s.note}</span>
      </div>
    </article>
  );
}

const FILTERS = [
  { id: "origin", label: "Origin Airport", value: "All Origins (36 Hubs)" },
  { id: "destination", label: "Destination Airport", value: "All Destinations (36 Hubs)" },
  { id: "airline", label: "Operating Airline", value: "All Airlines (5 Carriers)" },
  { id: "window", label: "Booking Window", value: "All Horizons (0–60 Days)" },
];

function FilterPanel() {
  return (
    <section className="mt-12 rounded-[28px] border-2 border-[#1e293b] bg-[#111627] p-7">
      <h2 className="flex items-center gap-3 text-2xl leading-9 font-semibold tracking-wide text-[#cbd5e1]">
        <Filter className="size-7 text-[#5cb3f0]" />
        SECTOR TELEMETRY FILTER
      </h2>
      <div className="mt-4 grid grid-cols-4 gap-5">
        {FILTERS.map((f) => (
          <div key={f.id}>
            <label htmlFor={f.id} className="block text-[22px] leading-8 text-[#94a3b8]">{f.label}</label>
            <div className="relative mt-2">
              <select id={f.id} className="h-[62px] w-full appearance-none rounded-[20px] border-2 border-[#1e293b] bg-[#020412] px-7 text-2xl text-[#f1f5f9]">
                <option>{f.value}</option>
              </select>
              <ChevronDown className="pointer-events-none absolute top-5 right-0 size-6 text-white" />
            </div>
          </div>
        ))}
      </div>
    </section>
  );
}

const TABS = ["ALL", "Metro", "Business", "Tourism", "Pilgrimage", "North-East"];

function Heatmap() {
  const [tab, setTab] = useState("ALL");
  return (
    <section className="mt-12">
      <div className="flex items-center justify-between">
        <h2 className="flex items-center gap-3 text-[32px] leading-[48px] font-bold text-[#f1f5f9]">
          <Compass className="size-8 text-[#5cb3f0]" />
          National Route Network Heatmap
        </h2>
        <span className={`text-2xl text-[#94a3b8] ${MONO}`}>288 Domestic Corridors Visualized</span>
      </div>
      <div className="relative mt-4 h-[1104px] overflow-hidden rounded-[28px] border-2 border-[#1e293b]">
        <GeoMap />
        <label className="absolute top-[30px] left-8 block">
          <input type="text" aria-label="Search airports or corridors" placeholder="Search airports or corridors..." className="h-[60px] w-[568px] rounded-[20px] border-2 border-[#1e293b] bg-[#111627] pr-6 pl-[60px] text-2xl text-white shadow-lg placeholder:text-[#64748b]" />
        </label>
        <div className="absolute top-5 left-[22px] flex w-16 flex-col overflow-hidden rounded-lg border-4 border-black/20 bg-clip-padding">
          <button aria-label="Zoom in" className="flex h-[60px] items-center justify-center border-b-2 border-[#ccc] bg-white pt-3 text-black">
            <svg viewBox="0 0 26 26" className="size-[26px]"><path d="M13 1v24M1 13h24" stroke="currentColor" strokeWidth="4" /></svg>
          </button>
          <button aria-label="Zoom out" className="flex h-[60px] items-center justify-center bg-[#f4f4f4] pt-2 text-[#bbb]">
            <svg viewBox="0 0 26 26" className="size-[26px]"><path d="M1 13h24" stroke="currentColor" strokeWidth="4" /></svg>
          </button>
        </div>
        <div className="absolute top-[22px] right-6 flex gap-1 rounded-[20px] border-2 border-[#1e293b] bg-[#111627] p-2 shadow-lg">
          {TABS.map((t) => (
            <button key={t} onClick={() => setTab(t)} className={`rounded-xl border-2 px-5 py-2 text-2xl leading-8 font-medium ${tab === t ? "border-[#334155] bg-[#1f2838] text-[#5cb3f0]" : "border-transparent text-[#94a3b8]"}`}>{t}</button>
          ))}
        </div>
        <aside className="absolute top-[518px] right-6 w-[440px] rounded-[28px] border-2 border-[#1e293b] bg-[#1a2032] p-6 shadow-2xl">
          <div className="flex items-center justify-between border-b-2 border-[#263143] pb-3">
            <h3 className="flex items-center gap-3 text-2xl font-bold whitespace-nowrap text-[#f1f5f9]">
              <Layers className="size-7 text-[#5cb3f0]" />
              Tariff Heatmap Legend
            </h3>
            <span className={`rounded-lg border-2 border-[#334155] bg-[#1f2838] px-3 text-xl leading-9 text-[#5cb3f0] ${MONO}`}>ALL</span>
          </div>
          <div className="h-64" />
        </aside>
      </div>
    </section>
  );
}

export default function App() {
  return (
    <div className="flex h-screen overflow-hidden border-t-2 border-[#dfe0e2] bg-[#020614] font-['Plus_Jakarta_Sans','Inter',sans-serif]">
      <div className="flex min-w-0 flex-1 flex-col overflow-hidden">
        <Header />
        <main className="mx-auto w-full max-w-[2560px] px-16 pt-12">
          <PageTitle />
          <div className="mt-12 grid grid-cols-4 gap-6">
            {STATS.map((s) => <StatCard key={s.label} s={s} />)}
          </div>
          <FilterPanel />
          <Heatmap />
        </main>
      </div>
      <div className="w-2.5 shrink-0 bg-[#0b0f1c]">
        <div className="h-[558px] rounded-full bg-[#1e2b45]" />
      </div>
    </div>
  );
}
